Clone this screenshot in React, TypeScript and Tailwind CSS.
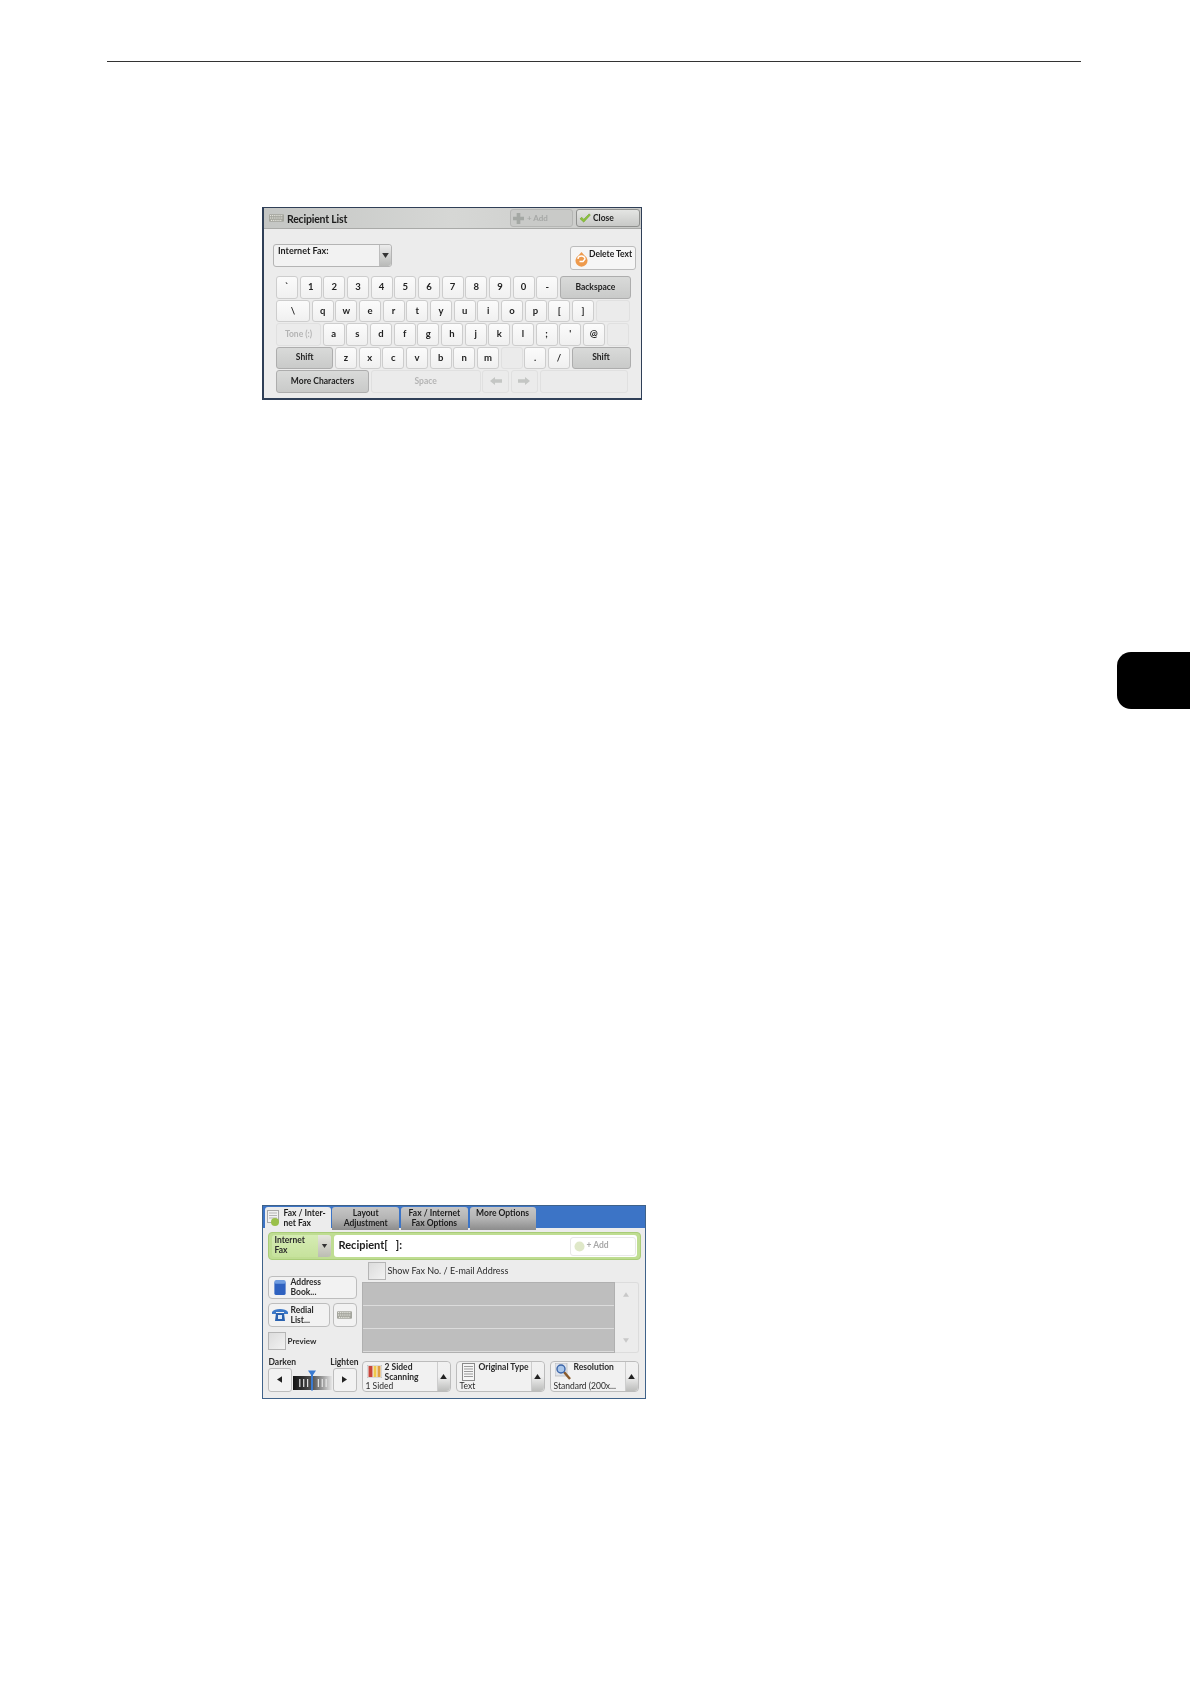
const font = 'font-["Lato","Noto_Sans",sans-serif]';

type KeyKind = 'plain' | 'dark' | 'off';

const keyKinds: Record<KeyKind, string> = {
  plain: 'border-[#cdcdcd] bg-gradient-to-b from-[#fbfbfb] to-[#f0f0f0] text-[#222]',
  dark: 'border-[#adadad] bg-gradient-to-b from-[#d9dad9] to-[#c9cac9] text-[#222]',
  off: 'border-[#e0e0e0] bg-[#ebebeb] text-[#b4b4b4]',
};

function Key({ label, w = 'w-[22px]', kind = 'plain', children }: { label?: string; w?: string; kind?: KeyKind; children?: React.ReactNode }) {
  const size = label && label.length > 1 ? 'text-[8.500px]' : 'text-[9.500px]';
  return (
    <div className={`${w} ${size} h-[22.5px] shrink-0 flex items-center justify-center rounded-[3px] border font-bold ${keyKinds[kind]}`}>
      {label}
      {children}
    </div>
  );
}

function KeyRow({ children }: { children: React.ReactNode }) {
  return <div className="flex gap-[1.67px] h-[22.5px]">{children}</div>;
}

function Keys({ chars }: { chars: string }) {
  return (
    <>
      {chars.split('').map((c, i) => (
        <Key key={i} label={c} />
      ))}
    </>
  );
}

function KeyboardIcon({ className = '' }: { className?: string }) {
  return (
    <svg viewBox="0 0 16 8" className={className}>
      <rect x="0" y="0" width="16" height="8" rx="1" fill="#a3a49c" />
      <path d="M1 1.500h14M1 4h14M2 6.500h12" stroke="#f6f6f0" strokeWidth="1" strokeDasharray="1.200 .8" />
    </svg>
  );
}

function Arrow({ dir, className = '' }: { dir: 'l' | 'r' | 'u' | 'd'; className?: string }) {
  const d = { l: 'M6 0v8L0 4z', r: 'M0 0v8l6-4z', u: 'M0 6h8L4 0z', d: 'M0 0h8L4 6z' }[dir];
  return (
    <svg viewBox={dir === 'l' || dir === 'r' ? '0 0 6 8' : '0 0 8 6'} className={className}>
      <path d={d} fill="currentColor" />
    </svg>
  );
}

function BlockArrow({ flip = false }: { flip?: boolean }) {
  return (
    <svg viewBox="0 0 12 8" className={`w-[12px] h-[8px] ${flip ? '-scale-x-100' : ''}`}>
      <path d="M0 4 5 0v2.200h7v3.600H5V8z" fill="#c4c6c4" />
    </svg>
  );
}

function KeyboardPanel() {
  return (
    <div className="ml-[262px] mt-[145px] w-[380px] h-[193px] flex flex-col border-[2px] border-t-[1.5px] border-r-[1px] border-[#2f3f57] bg-[#ececec] blur-[0.45px]">
      <div className="h-[21px] shrink-0 flex items-center pl-[5px] pr-[1px] border-b border-[#a9aaa8] bg-gradient-to-r from-[#c4c6c4] via-[#d6d7d5] to-[#c9cac8]">
        <KeyboardIcon className="w-[15px] h-[8px]" />
        <span className="ml-[3px] pt-[3px] text-[10.500px] font-bold tracking-[-0.2px] text-[#1c1c1c]">Recipient List</span>
        <div className="ml-auto w-[63px] h-[18px] flex items-center pl-[2px] gap-[3px] rounded-[3px] border border-[#b5b6b4] bg-[#c9cac8]">
          <svg viewBox="0 0 12 12" className="w-[11px] h-[11px]">
            <path d="M4 0h4v4h4v4H8v4H4V8H0V4h4z" fill="#a4a8a4" />
          </svg>
          <span className="text-[8px] font-bold text-[#a6a8a6]">+ Add</span>
        </div>
        <div className="ml-[3px] w-[64px] h-[18px] flex items-center pl-[2px] gap-[2px] rounded-[3px] border border-[#8f908e] bg-gradient-to-b from-[#e4e5e3] to-[#c8c9c7]">
          <svg viewBox="0 0 14 12" className="w-[12px] h-[10px]">
            <path d="M1 7l2-2 2.500 2.500L12 1l1.500 1.500L5.500 11z" fill="#8cc43c" stroke="#5f8f22" strokeWidth=".5" />
          </svg>
          <span className="text-[8.500px] font-bold text-[#1c1c1c]">Close</span>
        </div>
      </div>

      <div className="flex items-start pl-[9px] pr-[5px] pt-[15px]">
        <div className="w-[119px] h-[23px] flex rounded-[3px] border border-[#b4b4b4] bg-[#f2f2f2]">
          <span className="flex-1 pl-[4px] leading-[11px] text-[9px] font-bold text-[#1c1c1c]">Internet Fax:</span>
          <div className="w-[12px] flex items-center justify-center border-l border-[#bdbdbd] bg-gradient-to-b from-[#ececec] to-[#b9bab8] rounded-r-[3px]">
            <Arrow dir="d" className="w-[7px] h-[5px] text-[#333]" />
          </div>
        </div>
        <div className="ml-auto mt-[2px] w-[66px] h-[24px] flex rounded-[3px] border border-[#bcbcbc] bg-[#f6f6f6] pl-[3px]">
          <svg viewBox="0 0 15 15" className="w-[15px] h-[15px] mt-[5px] shrink-0">
            <path d="M7.500 0l3 3.500a6 6 0 1 1-6 0z" fill="#ee9a4c" />
            <path d="M4 7a3.500 3 0 0 1 7 0l-2 2.500H5.500" fill="none" stroke="#fff" strokeWidth="1.400" />
          </svg>
          <span className="pt-[2px] leading-[11px] text-[8.500px] font-bold whitespace-nowrap text-[#1c1c1c]">Delete Text</span>
        </div>
      </div>

      <div className="ml-[12px] mt-[6px] flex flex-col gap-[1px]">
        <KeyRow>
          <Keys chars="`1234567890-" />
          <Key label="Backspace" w="w-[71px]" kind="dark" />
        </KeyRow>
        <KeyRow>
          <Key label="\" w="w-[34px]" />
          <Keys chars="qwertyuiop[]" />
          <Key w="w-[34px]" kind="off" />
        </KeyRow>
        <KeyRow>
          <Key label="Tone (:)" w="w-[45px]" kind="off" />
          <Keys chars="asdfghjkl;'@" />
          <Key kind="off" />
        </KeyRow>
        <KeyRow>
          <Key label="Shift" w="w-[57.300px]" kind="dark" />
          <Keys chars="zxcvbnm" />
          <Key kind="off" />
          <Keys chars="./" />
          <Key label="Shift" w="w-[59px]" kind="dark" />
        </KeyRow>
        <KeyRow>
          <Key label="More Characters" w="w-[93px]" kind="dark" />
          <Key label="Space" w="w-[110px]" kind="off" />
          <Key w="w-[27px]" kind="off"><BlockArrow /></Key>
          <Key w="w-[27px]" kind="off"><BlockArrow flip /></Key>
          <Key w="w-[88px]" kind="off" />
        </KeyRow>
      </div>
    </div>
  );
}

function Tab({ active = false, w, children }: { active?: boolean; w: string; children: React.ReactNode }) {
  return (
    <div
      className={`${w} h-[23px] shrink-0 rounded-t-[3px] text-[8.500px] font-bold leading-[10px] text-center pt-[1px] ${
        active ? 'bg-[#ececec] text-[#1c1c1c]' : 'bg-gradient-to-b from-[#c6c6c6] via-[#b4b4b4] to-[#8c8c8c] text-[#1c1c1c]'
      }`}
    >
      {children}
    </div>
  );
}

function SideBtn({ w, h, children }: { w: string; h: string; children: React.ReactNode }) {
  return <div className={`${w} ${h} flex items-center rounded-[4px] border border-[#bdbdbd] bg-[#f2f2f2]`}>{children}</div>;
}

function Check() {
  return <div className="w-[18px] h-[18px] shrink-0 border border-[#b5b5b5] bg-gradient-to-br from-[#dcdcdc] to-[#f2f2f2]" />;
}

function FeatureBtn({ icon, title, value }: { icon: React.ReactNode; title: React.ReactNode; value: string }) {
  return (
    <div className="w-[89px] h-[31px] flex rounded-[4px] border border-[#bcbcbc] bg-[#f1f1f1]">
      <div className="relative flex-1 min-w-0 pl-[3px]">
        <div className="flex">
          <div className="w-[18px] h-[20px] shrink-0 flex items-center justify-center">{icon}</div>
          <div className="flex-1 pl-[1px] text-[8.500px] font-bold leading-[10px] text-[#2a2a2a]">{title}</div>
        </div>
        <div className="absolute left-[3px] -bottom-[1px] text-[8.500px] leading-[11px] whitespace-nowrap text-[#2a2a2a]">{value}</div>
      </div>
      <div className="w-[13px] shrink-0 flex items-center justify-center rounded-r-[4px] border-l border-[#cdcdcd] bg-gradient-to-b from-[#f1f1f1] via-[#efefef] to-[#bcbdbb]">
        <Arrow dir="u" className="w-[7px] h-[5px] text-[#222]" />
      </div>
    </div>
  );
}

function FaxPanel() {
  return (
    <div className="ml-[262px] mt-[496px] w-[384px] h-[194px] flex flex-col border-[1.5px] border-[#3f6289] bg-[#ececec] blur-[0.45px]">
      <div className="h-[22px] shrink-0 flex items-start gap-[1.700px] pl-[1.500px] pt-[0.500px] bg-[#3c74c6]">
        <Tab active w="w-[66px]">
          <div className="flex text-left">
            <svg viewBox="0 0 14 16" className="w-[14px] h-[16px] shrink-0 ml-[2px] mt-[2px]">
              <rect x="0.500" y="0.500" width="11" height="12" fill="#f2f2f2" stroke="#a8a8a8" />
              <path d="M2 3h8M2 5.500h8M2 8h8" stroke="#b5b5b5" />
              <circle cx="8" cy="12" r="4" fill="#9ac04a" />
            </svg>
            <span className="ml-[3px] whitespace-nowrap">Fax / Inter-<br />net Fax</span>
          </div>
        </Tab>
        <Tab w="w-[67px]">Layout<br />Adjustment</Tab>
        <Tab w="w-[67px]">Fax / Internet<br />Fax Options</Tab>
        <Tab w="w-[66px]">More Options</Tab>
      </div>

      <div className="mx-[4.500px] mt-[4px] h-[28px] shrink-0 flex items-center gap-[3px] rounded-[4px] border border-[#a9cc78] bg-[#bfdd92] px-[3px]">
        <div className="w-[59px] h-[22px] flex rounded-[3px] bg-gradient-to-b from-[#d6ecb4] to-[#c6e29c]">
          <div className="flex-1 pl-[3px] text-[8.500px] font-bold leading-[10px] text-[#2a2a2a]">Internet<br />Fax</div>
          <div className="w-[13px] flex items-center justify-center rounded-r-[3px] bg-gradient-to-b from-[#e6e6de] to-[#bcbdb3]">
            <Arrow dir="d" className="w-[7px] h-[4px] text-[#333]" />
          </div>
        </div>
        <div className="flex-1 h-[22px] flex items-center rounded-[3px] bg-white pl-[5px] pr-[1px]">
          <span className="pb-[2px] text-[11px] font-bold text-[#1c1c1c]">Recipient[&nbsp;&nbsp;&nbsp;]:</span>
          <div className="ml-auto w-[66px] h-[19px] flex items-center pl-[3px] gap-[2px] rounded-[3px] border border-[#e8e8e8]">
            <svg viewBox="0 0 12 12" className="w-[11px] h-[11px]">
              <circle cx="6" cy="6" r="5.500" fill="#dfe8c8" />
            </svg>
            <span className="pb-[1px] text-[8.500px] font-bold text-[#a8a8a8]">+ Add</span>
          </div>
        </div>
      </div>

      <div className="flex gap-[5px] pl-[4.500px] mt-[2.500px]">
        <div className="w-[89px] shrink-0 flex flex-col">
          <div className="mt-[13px]">
            <SideBtn w="w-[89px]" h="h-[23px]">
              <svg viewBox="0 0 12 16" className="w-[12px] h-[15px] ml-[5px] shrink-0">
                <rect x="0" y="1" width="12" height="15" rx="2" fill="#2f62c0" />
                <rect x="0" y="0" width="12" height="4" rx="2" fill="#6f9ce0" />
              </svg>
              <span className="ml-[5px] text-[8.500px] font-bold leading-[10px] text-[#2a2a2a]">Address<br />Book...</span>
            </SideBtn>
          </div>
          <div className="mt-[4px] flex gap-[3px]">
            <SideBtn w="w-[62px]" h="h-[24px]">
              <svg viewBox="0 0 16 13" className="w-[16px] h-[13px] ml-[3px] shrink-0">
                <path d="M0 4C2 0 14 0 16 4v2h-4V4H4v2H0z" fill="#3b78c8" />
                <path d="M3 13l1-8h8l1 8z" fill="#2a62b0" />
                <rect x="6" y="7" width="4" height="4" fill="#dce8f6" />
              </svg>
              <span className="ml-[3px] text-[8.500px] font-bold leading-[10px] text-[#2a2a2a]">Redial<br />List...</span>
            </SideBtn>
            <SideBtn w="w-[24px]" h="h-[24px]">
              <KeyboardIcon className="w-[15px] h-[8px] mx-auto" />
            </SideBtn>
          </div>
          <div className="mt-[5px] flex items-center gap-[2px]">
            <Check />
            <span className="text-[8px] font-bold text-[#2a2a2a]">Preview</span>
          </div>
          <div className="mt-[7px] flex justify-between -mr-[2px] pl-[1px] text-[8.500px] font-bold leading-[11px] text-[#2a2a2a]">
            <span>Darken</span>
            <span>Lighten</span>
          </div>
          <div className="flex items-center">
            <div className="w-[24px] h-[24px] flex items-center justify-center rounded-[3px] border border-[#bdbdbd] bg-[#f2f2f2]">
              <Arrow dir="l" className="w-[5px] h-[7px] text-[#222]" />
            </div>
            <div className="relative flex-1 h-[24px]">
              <div className="absolute left-[1px] right-[1px] top-[8px] h-[14px] bg-gradient-to-r from-[#111] via-[#555] to-[#e6e6e6]" />
              <svg viewBox="0 0 40 14" preserveAspectRatio="none" className="absolute left-[1px] right-[1px] top-[8px] w-[39px] h-[14px]">
                <path d="M7 3v8M11 3v8M15 3v8M26 3v8M30 3v8M34 3v8" stroke="#e8e8e8" strokeWidth="1.200" />
              </svg>
              <svg viewBox="0 0 8 20" className="absolute left-[16px] top-[2px] w-[8px] h-[21px]">
                <path d="M0 0h8L5 4.500V20H3V4.500z" fill="#3a7ad0" />
              </svg>
            </div>
            <div className="w-[24px] h-[24px] flex items-center justify-center rounded-[3px] border border-[#bdbdbd] bg-[#f2f2f2]">
              <Arrow dir="r" className="w-[5px] h-[7px] text-[#222]" />
            </div>
          </div>
        </div>

        <div className="w-[277px] shrink-0 flex flex-col">
          <div className="flex items-center gap-[2px] h-[17px]">
            <div className="ml-[6px]"><Check /></div>
            <span className="text-[9px] text-[#2a2a2a]">Show Fax No. / E-mail Address</span>
          </div>
          <div className="mt-[2px] h-[71px] flex">
            <div className="flex-1 flex flex-col gap-[1px] border border-[#b0b0b0] bg-[#dcdcdc]">
              <div className="flex-1 bg-[#bebebe]" />
              <div className="flex-1 bg-[#bebebe]" />
              <div className="flex-1 bg-[#bebebe]" />
            </div>
            <div className="w-[24px] flex flex-col items-center justify-between rounded-r-[3px] border border-l-0 border-[#dcdcdc] py-[9px] text-[#c8c8c8]">
              <Arrow dir="u" className="w-[6px] h-[5px]" />
              <Arrow dir="d" className="w-[6px] h-[5px]" />
            </div>
          </div>
          <div className="mt-[8px] flex justify-between">
            <FeatureBtn
              icon={
                <svg viewBox="0 0 15 13" className="w-[15px] h-[13px]">
                  <rect x="0" y="0" width="15" height="13" fill="#f4f4f4" stroke="#999" strokeWidth=".6" />
                  <rect x="1.500" y="1" width="4" height="11" fill="#c8453a" />
                  <rect x="6.500" y="1" width="3" height="11" fill="#f0c84a" />
                  <rect x="10.500" y="1" width="3" height="11" fill="#e0a040" />
                </svg>
              }
              title={<>2 Sided<br />Scanning</>}
              value="1 Sided"
            />
            <FeatureBtn
              icon={
                <svg viewBox="0 0 13 18" className="w-[13px] h-[18px]">
                  <rect x=".5" y=".5" width="12" height="17" fill="#f6f6f6" stroke="#8a8a8a" />
                  <path d="M2 3.500h9M2 6h9M2 8.500h9M2 11h9M2 13.500h9" stroke="#9a9a9a" />
                </svg>
              }
              title={<span className="whitespace-nowrap">Original Type</span>}
              value="Text"
            />
            <FeatureBtn
              icon={
                <svg viewBox="0 0 16 17" className="w-[16px] h-[17px]">
                  <rect x="0" y="0" width="12" height="13" fill="#dfe3ea" stroke="#a0a0a0" strokeWidth=".5" />
                  <path d="M9 9l6 7" stroke="#8a5a2a" strokeWidth="2.500" />
                  <circle cx="6" cy="6" r="4" fill="#a9c6ea" stroke="#3a64a8" strokeWidth="1.400" />
                </svg>
              }
              title={<span className="pl-[1px]">Resolution</span>}
              value="Standard (200x..."
            />
          </div>
        </div>
      </div>
    </div>
  );
}

export default function App() {
  return (
    <div className={`w-[1190px] h-[1684px] overflow-hidden bg-white ${font}`}>
      <div className="pt-[61px]">
        <div className="ml-[107px] w-[974px] h-px bg-[#333]" />
        <KeyboardPanel />
        <div className="ml-[1117px] mt-[252px] w-[73px] h-[57px] rounded-l-[14px] bg-black" />
        <FaxPanel />
      </div>
    </div>
  );
}
